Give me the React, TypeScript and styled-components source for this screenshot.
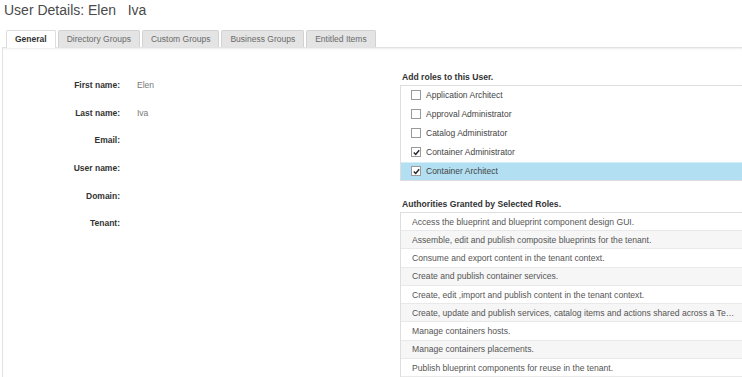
import React from 'react';
import styled, { createGlobalStyle } from 'styled-components';

const GlobalStyle = createGlobalStyle`
  html, body {
    margin: 0;
    padding: 0;
    background: #fff;
    overflow: hidden;
  }
  body {
    font-family: 'Liberation Sans', Arial, sans-serif;
    color: #333;
  }
`;

const Page = styled.div`
  padding: 2px 0 0 2px;
`;

const Title = styled.h1`
  margin: 0 0 12px 2px;
  font-size: 14px;
  line-height: 16px;
  font-weight: 400;
  color: #4a4a4a;
  white-space: pre;
`;

const TabBar = styled.div`
  display: flex;
  gap: 2px;
  padding-left: 4px;
  position: relative;
  z-index: 1;
`;

const Tab = styled.div<{ $active?: boolean }>`
  height: 16px;
  padding: 0 8px;
  display: flex;
  align-items: center;
  font-size: 8.5px;
  border: 1px solid ${(p) => (p.$active ? '#dcdcdc' : '#d2d2d2')};
  border-bottom: none;
  border-radius: 2px 2px 0 0;
  background: ${(p) => (p.$active ? '#fff' : '#e4e4e4')};
  color: ${(p) => (p.$active ? '#333' : '#6a6a6a')};
  font-weight: ${(p) => (p.$active ? 700 : 400)};
  margin-bottom: ${(p) => (p.$active ? '-1px' : '0')};
  padding-bottom: ${(p) => (p.$active ? '1px' : '0')};
`;

const Panel = styled.div`
  display: flex;
  border: 1px solid #e2e2e2;
  border-right: none;
  border-bottom: none;
  box-shadow: inset 0 2px 2px -1px #ececec;
  height: 340px;
`;

const Form = styled.div`
  width: 397px;
  padding-top: 23px;
  display: grid;
  grid-template-columns: 117px 1fr;
  grid-auto-rows: 27.7px;
  column-gap: 17px;
  align-content: start;
`;

const Label = styled.div`
  font-size: 8.5px;
  font-weight: 700;
  color: #333;
  display: flex;
  align-items: center;
  justify-content: flex-end;
`;

const Value = styled.div`
  font-size: 8.5px;
  color: #777;
  display: flex;
  align-items: center;
`;

const Side = styled.div`
  flex: 1;
  min-width: 0;
  padding-top: 24px;
`;

const SectionHead = styled.div<{ $above?: number; $below: number }>`
  font-size: 8.6px;
  line-height: 11px;
  font-weight: 700;
  color: #333;
  padding-left: 2px;
  margin-top: ${(p) => p.$above ?? 0}px;
  margin-bottom: ${(p) => p.$below}px;
`;

const ListBox = styled.div`
  border: 1px solid #dedede;
  border-right: none;
`;

const RoleRow = styled.div<{ $selected?: boolean }>`
  height: 18.9px;
  display: flex;
  align-items: center;
  gap: 5px;
  padding-left: 10px;
  font-size: 8.5px;
  color: #444;
  background: ${(p) => (p.$selected ? '#b2e0f2' : '#fff')};
  box-shadow: ${(p) => (p.$selected ? 'inset 0 1px 0 #d4eef8' : 'none')};
`;

const Box = styled.span`
  width: 8px;
  height: 8px;
  border: 1px solid #9a9a9a;
  background: #fff;
  display: flex;
  align-items: center;
  justify-content: center;
  flex: none;
`;

const AuthRow = styled.div<{ $shade?: boolean }>`
  height: 18.25px;
  box-sizing: border-box;
  display: flex;
  align-items: center;
  padding: 0 7px 0 11px;
  font-size: 8.6px;
  color: #555;
  background: ${(p) => (p.$shade ? '#f6f6f6' : '#fff')};
  border-bottom: 1px solid #e9e9e9;
  white-space: nowrap;
  overflow: hidden;
  span {
    overflow: hidden;
    text-overflow: ellipsis;
  }
`;

const fields: [string, string][] = [
  ['First name:', 'Elen'],
  ['Last name:', 'Iva'],
  ['Email:', ''],
  ['User name:', ''],
  ['Domain:', ''],
  ['Tenant:', ''],
];

const roles = [
  { name: 'Application Architect', checked: false },
  { name: 'Approval Administrator', checked: false },
  { name: 'Catalog Administrator', checked: false },
  { name: 'Container Administrator', checked: true },
  { name: 'Container Architect', checked: true, selected: true },
];

const authorities = [
  'Access the blueprint and blueprint component design GUI.',
  'Assemble, edit and publish composite blueprints for the tenant.',
  'Consume and export content in the tenant context.',
  'Create and publish container services.',
  'Create, edit ,import and publish content in the tenant context.',
  'Create, update and publish services, catalog items and actions shared across a Tenant.',
  'Manage containers hosts.',
  'Manage containers placements.',
  'Publish blueprint components for reuse in the tenant.',
];

const tabs = ['General', 'Directory Groups', 'Custom Groups', 'Business Groups', 'Entitled Items'];

const Check = () => (
  <svg width="7" height="7" viewBox="0 0 7 7">
    <path d="M0.8 3.6 L2.7 5.5 L6.2 1.2" fill="none" stroke="#222" strokeWidth="1.4" />
  </svg>
);

const App = () => {
  return (
    <Page>
      <GlobalStyle />
      <Title>{'User Details: Elen   Iva'}</Title>
      <TabBar>
        {tabs.map((t, i) => (
          <Tab key={t} $active={i === 0}>
            {t}
          </Tab>
        ))}
      </TabBar>
      <Panel>
        <Form>
          {fields.map(([label, value]) => (
            <React.Fragment key={label}>
              <Label>{label}</Label>
              <Value>{value}</Value>
            </React.Fragment>
          ))}
        </Form>
        <Side>
          <SectionHead $below={2}>Add roles to this User.</SectionHead>
          <ListBox>
            {roles.map((r) => (
              <RoleRow key={r.name} $selected={r.selected}>
                <Box>{r.checked && <Check />}</Box>
                {r.name}
              </RoleRow>
            ))}
          </ListBox>
          <SectionHead $above={18} $below={1.5}>
            Authorities Granted by Selected Roles.
          </SectionHead>
          <ListBox>
            {authorities.map((a, i) => (
              <AuthRow key={a} $shade={i % 2 === 1}>
                <span>{a}</span>
              </AuthRow>
            ))}
          </ListBox>
        </Side>
      </Panel>
    </Page>
  );
};

export default App;
